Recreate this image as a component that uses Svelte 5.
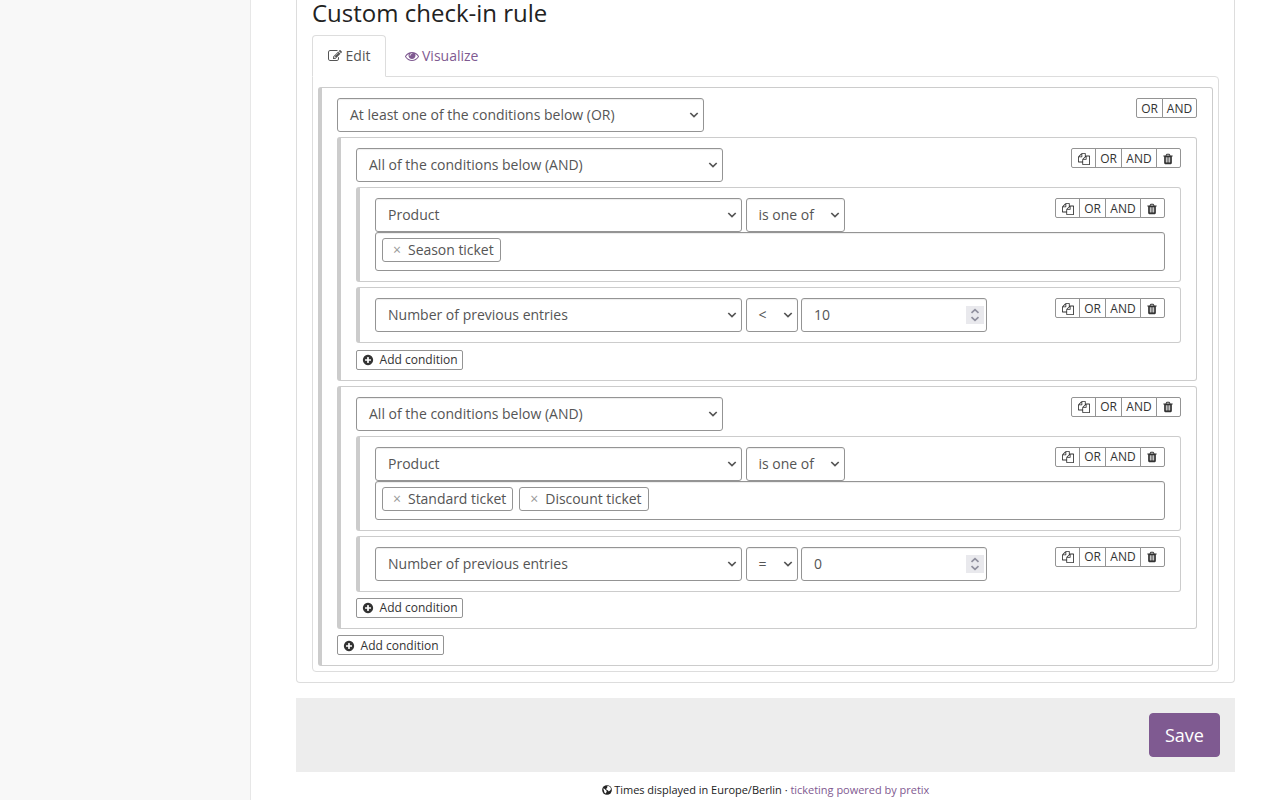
<script>
  const leaf = (variable, op, extra) => ({ variable, op, ...extra });
  const groups = [
    [
      leaf('Product', 'is one of', { tags: ['Season ticket'] }),
      leaf('Number of previous entries', '<', { value: '10' })
    ],
    [
      leaf('Product', 'is one of', { tags: ['Standard ticket', 'Discount ticket'] }),
      leaf('Number of previous entries', '=', { value: '0' })
    ]
  ];

  const paths = {
    edit: 'M888 1184l116-116-152-152-116 116v56h96v96h56zm440-720q-16-16-33 1l-350 350q-17 17-1 33t33-1l350-350q17-17 1-33zm80 594v190q0 119-84.5 203.5t-203.5 84.5h-832q-119 0-203.5-84.5t-84.5-203.5v-832q0-119 84.5-203.5t203.5-84.5h832q63 0 117 25 15 7 18 23 3 17-9 29l-49 49q-14 14-32 8-23-6-45-6h-832q-66 0-113 47t-47 113v832q0 66 47 113t113 47h832q66 0 113-47t47-113v-126q0-13 9-22l64-64q15-15 35-7t20 29zm-96-738l288 288-672 672h-288v-288zm444 132l-92 92-288-288 92-92q28-28 68-28t68 28l152 152q28 28 28 68t-28 68z',
    eye: 'M1664 960q-152-236-381-353 61 104 61 225 0 185-131.5 316.5t-316.5 131.5-316.5-131.5-131.5-316.5q0-121 61-225-229 117-381 353 133 205 333.5 326.5t434.5 121.5 434.5-121.5 333.5-326.5zm-720-384q0-20-14-34t-34-14q-125 0-214.5 89.5t-89.5 214.5q0 20 14 34t34 14 34-14 14-34q0-86 61-147t147-61q20 0 34-14t14-34zm848 384q0 34-20 69-140 230-376.5 368.5t-499.5 138.5-499.5-139-376.5-368q-20-35-20-69t20-69q140-229 376.5-368t499.5-139 499.5 139 376.5 368q20 35 20 69z',
    trash: 'M704 1376v-704q0-14-9-23t-23-9h-64q-14 0-23 9t-9 23v704q0 14 9 23t23 9h64q14 0 23-9t9-23zm256 0v-704q0-14-9-23t-23-9h-64q-14 0-23 9t-9 23v704q0 14 9 23t23 9h64q14 0 23-9t9-23zm256 0v-704q0-14-9-23t-23-9h-64q-14 0-23 9t-9 23v704q0 14 9 23t23 9h64q14 0 23-9t9-23zm-544-992h448l-48-117q-7-9-17-11h-317q-10 2-17 11zm928 32v64q0 14-9 23t-23 9h-96v948q0 83-47 143.5t-113 60.5h-832q-66 0-113-58.5t-47-141.5v-952h-96q-14 0-23-9t-9-23v-64q0-14 9-23t23-9h309l70-167q15-37 54-63t79-26h320q40 0 79 26t54 63l70 167h309q14 0 23 9t9 23z',
    copy: 'M1696 384q40 0 68 28t28 68v1216q0 40-28 68t-68 28h-960q-40 0-68-28t-28-68v-288h-544q-40 0-68-28t-28-68v-672q0-40 20-88t48-76l408-408q28-28 76-48t88-20h416q40 0 68 28t28 68v328q68-40 128-40h416zm-544 213l-299 299h299v-299zm-640-384l-299 299h299v-299zm196 647l316-316v-416h-384v416q0 40-28 68t-68 28h-416v640h512v-256q0-40 20-88t48-76zm956 804v-1152h-384v416q0 40-28 68t-68 28h-416v640h896z',
    plus: 'M1344 960v-128q0-26-19-45t-45-19h-256v-256q0-26-19-45t-45-19h-128q-26 0-45 19t-19 45v256h-256q-26 0-45 19t-19 45v128q0 26 19 45t45 19h256v256q0 26 19 45t45 19h128q26 0 45-19t19-45v-256h256q26 0 45-19t19-45zm320-64q0 209-103 385.5t-279.5 279.5-385.5 103-385.5-103-279.5-279.5-103-385.5 103-385.5 279.5-279.5 385.5-103 385.5 103 279.5 279.5 103 385.5z'
  };
</script>

{#snippet icon(name, size)}
  <svg class="icon" viewBox="0 0 1792 1792" width={size} height={size}><path d={paths[name]} /></svg>
{/snippet}

{#snippet select(text, kind)}
  <div class="control select {kind}">
    <span>{text}</span>
    <svg width="10" height="6" viewBox="0 0 10 6"><path d="M1.3 1l3.7 3.6L8.7 1" /></svg>
  </div>
{/snippet}

{#snippet tools(full, low)}
  <div class="tools" class:full class:low>
    {#if full}<button class="ic">{@render icon('copy', 12)}</button>{/if}
    <button>OR</button>
    <button class="and">AND</button>
    {#if full}<button class="ic bin">{@render icon('trash', 12)}</button>{/if}
  </div>
{/snippet}

{#snippet add()}
  <button class="add">{@render icon('plus', 12)}<span>Add condition</span></button>
{/snippet}

<div class="page">
  <aside></aside>
  <main>
    <section class="panel">
      <h3>Custom check-in rule</h3>
      <nav>
        <a class="tab active">{@render icon('edit', 14)}<span>Edit</span></a>
        <a class="tab">{@render icon('eye', 14)}<span>Visualize</span></a>
      </nav>
      <div class="content">
        <div class="rule root">
          <div class="head">
            {@render select('At least one of the conditions below (OR)', 'wide')}
            {@render tools(false, true)}
          </div>
          {#each groups as group, i}
            <div class="rule group">
              <div class="head">
                {@render select('All of the conditions below (AND)', 'wide')}
                {@render tools(true, i === 0)}
              </div>
              {#each group as item}
                <div class="rule">
                  <div class="head">
                    {@render select(item.variable, 'wide')}
                    {@render select(item.op, item.tags ? 'medium' : 'small')}
                    {#if item.value}
                      <div class="control number">
                        <span>{item.value}</span>
                        <div class="spin">
                          <svg width="18" height="18" viewBox="0 0 18 18"><path d="M5.5 6.8L9 3.6l3.5 3.2M5.5 11.2L9 14.4l3.5-3.2" /></svg>
                        </div>
                      </div>
                    {/if}
                    {@render tools(true, i === 0)}
                  </div>
                  {#if item.tags}
                    <div class="tags">
                      {#each item.tags as tag}
                        <span class="tag"><b>×</b>{tag}</span>
                      {/each}
                    </div>
                  {/if}
                </div>
              {/each}
              {@render add()}
            </div>
          {/each}
          {@render add()}
        </div>
      </div>
    </section>
    <div class="savebar"><button class="save">Save</button></div>
    <footer>
      <svg class="globe" width="10" height="10" viewBox="0 0 20 20">
        <circle cx="10" cy="10" r="9.7" />
        <path d="M10 3l3-1 3.4 2 1.8 4-2 3-2.8 2.2-1.6-2.6-2.6-.4-.6-3 2-1.6zM2.4 7l2.6.6 2.4 2.6 2.2 2-1 2.6-1.4 2.4-2.4-2.4-.8-3.2z" />
      </svg>
      <span>Times displayed in Europe/Berlin · <a>ticketing powered by pretix</a></span>
    </footer>
  </main>
</div>

<style>
  :global(body) { background: #fff; overflow: hidden; }
  * { box-sizing: border-box; }
  .page {
    display: flex;
    height: 800px;
    overflow: hidden;
    font: 14px/20px "Open Sans", sans-serif;
    color: #222;
  }
  aside { width: 251px; flex: none; background: #f8f8f8; border-right: 1px solid #e7e7e7; }
  main { flex: 1; padding: 0 45px; }
  button { font: inherit; color: #333; background: #fff; margin: 0; cursor: pointer; }
  .icon { fill: currentColor; flex: none; display: block; }
  .panel {
    height: 683px;
    padding: 0 15px;
    border: 1px solid #ddd;
    border-top: 0;
    border-radius: 0 0 4px 4px;
  }
  h3 { margin: 0; height: 35px; font-size: 24px; line-height: 26px; font-weight: 400; }
  nav { display: flex; gap: 2.5px; height: 41px; }
  .tab {
    display: flex;
    align-items: center;
    gap: 3.5px;
    height: 42px;
    padding: 0 15px;
    border: 1px solid transparent;
    border-radius: 4px 4px 0 0;
    color: #7f5a91;
  }
  .tab.active {
    width: 74px;
    gap: 3.6px;
    padding-right: 0;
    color: #555;
    background: #fff;
    border-color: #ddd #ddd #fff;
    position: relative;
    z-index: 1;
  }
  .content {
    padding: 10px 5px 5px;
    border: 1px solid #ddd;
    border-radius: 0 4px 4px 4px;
  }
  .rule {
    margin-bottom: 5px;
    padding: 10px 15px;
    border: 1px solid #ccc;
    border-left-width: 4px;
    border-radius: 3px;
  }
  .root { margin-bottom: 0; }
  .group { height: 243.7px; }
  .rule .rule { margin-top: 5px; }
  .head { display: flex; gap: 4px; height: 34px; }
  .control {
    display: flex;
    align-items: center;
    justify-content: space-between;
    height: 34px;
    padding: 0 4px 0 12px;
    border: 1px solid #949494;
    border-radius: 3px;
    color: #555;
    box-shadow: inset 0 1px 1px rgba(0, 0, 0, .075);
  }
  .control svg { fill: none; stroke: #555; stroke-width: 1.7; }
  .wide { width: 367px; }
  .medium { width: 99px; padding-left: 11.4px; }
  .small { width: 52px; padding-left: 11.4px; }
  .number { width: 186px; margin-left: -1px; padding-right: 2px; }
  .spin { width: 18px; height: 18px; background: #e9e9ed; }
  .spin svg { display: block; stroke: #8f8f9d; }
  .tools { display: flex; margin-left: auto; height: 20px; }
  .tools button {
    display: flex;
    align-items: center;
    justify-content: center;
    width: 27px;
    height: 20px;
    padding: 0;
    border: 1px solid #949494;
    font-size: 12px;
    line-height: 18px;
  }
  .tools.low button { padding-top: 1px; }
  .tools button + button { margin-left: -1px; }
  .tools .and { width: 35px; }
  .tools.full .and { width: 36px; }
  .tools .ic { width: 25px; }
  .tools .bin { padding-right: 1px; }
  .tools button:first-child { border-radius: 2px 0 0 2px; }
  .tools button:last-child { border-radius: 0 2px 2px 0; }
  .tags {
    display: flex;
    gap: 6px;
    height: 39px;
    padding: 5px 6px;
    border: 1px solid #949494;
    border-radius: 3px;
    box-shadow: inset 0 1px 1px rgba(0, 0, 0, .075);
  }
  .tag {
    height: 24px;
    padding: 0 6px 0 10px;
    border: 1px solid #949494;
    border-radius: 3px;
    line-height: 22px;
    letter-spacing: -.03px;
    color: #555;
  }
  .tag b { margin-right: 7px; font-weight: 400; color: #999; }
  .add {
    display: flex;
    align-items: center;
    gap: 5.4px;
    height: 20px;
    width: 107px;
    margin-top: 6.6px;
    padding: 0 0 0 5.2px;
    border: 1px solid #949494;
    border-radius: 2px;
    font-size: 12px;
    line-height: 18px;
    white-space: nowrap;
  }
  .root > .add { margin-top: 6px; padding-top: 1px; }
  .savebar {
    display: flex;
    justify-content: flex-end;
    margin-top: 15px;
    height: 74px;
    padding: 15px;
    background: #ededed;
  }
  .save {
    width: 71px;
    height: 44px;
    padding: 0;
    border: 1px solid #7f5a91;
    border-radius: 4px;
    background: #7f5a91;
    color: #fff;
    font-size: 18px;
  }
  footer {
    display: flex;
    justify-content: center;
    align-items: center;
    gap: 2.5px;
    margin-top: 10px;
    height: 16px;
    font-size: 11px;
    line-height: 16px;
    letter-spacing: -.02px;
  }
  footer a { color: #7f5a91; }
  .globe circle { fill: #222; }
  .globe path { fill: #fff; }
</style>
